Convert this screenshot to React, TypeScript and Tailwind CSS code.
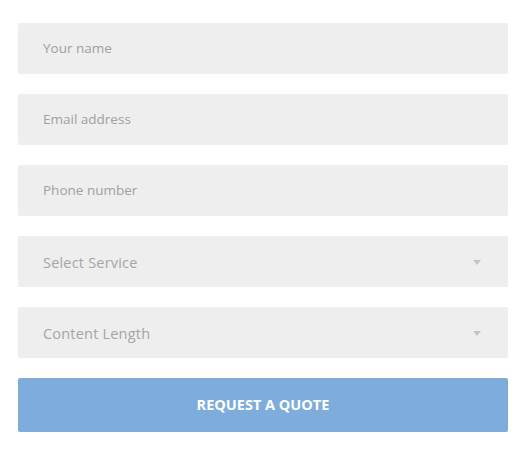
import React from "react";

const font = { fontFamily: "'Open Sans', Lato, sans-serif" };

function Field({ label, select }: { label: string; select?: boolean }) {
  return (
    <div className="flex h-[51px] items-center justify-between rounded-[2px] bg-[#eeeeee] pl-[25px] pr-[27px]">
      <span className={select ? "mt-[2px] text-[14.5px] text-[#a5a5a5] tracking-[0.2px]" : "text-[13.5px] text-[#a0a0a0]"}>{label}</span>
      {select && (
        <svg width="8" height="5" viewBox="0 0 8 5" className="mt-[1px]">
          <path d="M0 0 L8 0 L4 5 Z" fill="#c4c4c4" />
        </svg>
      )}
    </div>
  );
}

export default function App() {
  return (
    <div className="min-h-[453px] w-[530px] bg-white pl-[18px] pr-[22px] pt-[23px]" style={font}>
      <div className="flex flex-col gap-[20px]">
        <Field label="Your name" />
        <Field label="Email address" />
        <Field label="Phone number" />
        <Field label="Select Service" select />
        <Field label="Content Length" select />
        <button className="flex h-[54px] w-full items-center justify-center rounded-[2px] bg-[#7eacdb] text-[14.5px] font-bold text-white">
          REQUEST A QUOTE
        </button>
      </div>
    </div>
  );
}
